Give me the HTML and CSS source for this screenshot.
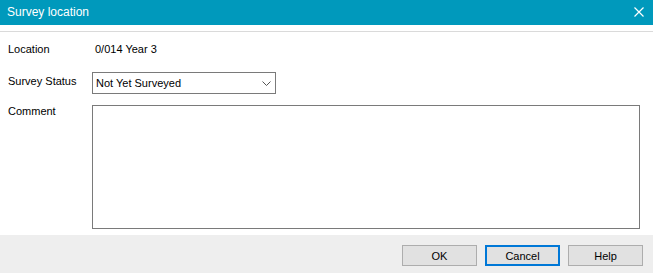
FILE: index.html
```html
<!DOCTYPE html>
<html lang="en">
<head>
    <meta charset="UTF-8">
    <title>Survey location</title>
    <link rel="stylesheet" href="styles.css">
</head>
<body>
    <div class="dialog">
        <div class="titlebar">
            <span class="title">Survey location</span>
            <svg class="close" width="10" height="10" viewBox="0 0 10 10">
                <path d="M0.5 0.5 L9.5 9.5 M9.5 0.5 L0.5 9.5" stroke="#fff" stroke-width="1.2" fill="none"/>
            </svg>
        </div>
        <div class="divider"></div>

        <div class="content">
            <div class="row row-location">
                <span class="label">Location</span>
                <span class="value">0/014 Year 3</span>
            </div>
            <div class="row row-status">
                <span class="label">Survey Status</span>
                <div class="select">
                    <span>Not Yet Surveyed</span>
                    <svg width="9" height="5" viewBox="0 0 9 5">
                        <path d="M0.5 0.5 L4.5 4.5 L8.5 0.5" stroke="#555" stroke-width="1" fill="none"/>
                    </svg>
                </div>
            </div>
            <div class="row row-comment">
                <span class="label">Comment</span>
                <div class="textarea"></div>
            </div>
        </div>

        <div class="footer">
            <button class="btn">OK</button>
            <button class="btn btn-default">Cancel</button>
            <button class="btn">Help</button>
        </div>
    </div>
</body>
</html>
```

FILE: styles.css
```css
body {
    margin: 0;
    padding: 0;
    background: #fff;
    font-family: 'Liberation Sans', Arial, sans-serif;
    font-size: 11px;
    color: #000;
}

.dialog {
    width: 653px;
    height: 273px;
    display: flex;
    flex-direction: column;
}

.titlebar {
    height: 25px;
    background-color: #0099bc;
    display: flex;
    align-items: center;
    justify-content: space-between;
    padding: 0 9px 0 7px;
    color: #fff;
}

.title {
    font-size: 12px;
    margin-top: -2px;
}

.close {
    margin-top: -2px;
}

.divider {
    margin-top: 6px;
    height: 1px;
    background: #dadada;
}

.content {
    flex: 1;
    padding: 0 13px 0 8px;
    display: flex;
    flex-direction: column;
}

.row {
    display: flex;
}

.label {
    width: 84px;
    flex-shrink: 0;
}

.row-location {
    margin-top: 9px;
    height: 16px;
    align-items: center;
}

.value {
    padding-left: 3px;
}

.row-status {
    margin-top: 15px;
    align-items: center;
}

.row-status .label {
    margin-top: -4px;
}

.select {
    width: 175px;
    height: 20px;
    border: 1px solid #7a7a7a;
    display: flex;
    align-items: center;
    justify-content: space-between;
    padding: 0 4px 0 3px;
}

.row-comment {
    margin-top: 11px;
}

.textarea {
    flex: 1;
    height: 122px;
    border: 1px solid #7a7a7a;
}

.footer {
    height: 38px;
    margin-top: auto;
    background: #eeeeee;
    display: flex;
    justify-content: flex-end;
    align-items: flex-start;
    gap: 8px;
    padding: 10px 10px 0 0;
    box-sizing: border-box;
}

.btn {
    width: 75px;
    height: 21px;
    margin: 0;
    background: #e1e1e1;
    border: 1px solid #adadad;
    font-family: 'Liberation Sans', Arial, sans-serif;
    font-size: 11px;
    color: #000;
    padding: 0;
}

.btn-default {
    border: 2px solid #0078d7;
}
```
